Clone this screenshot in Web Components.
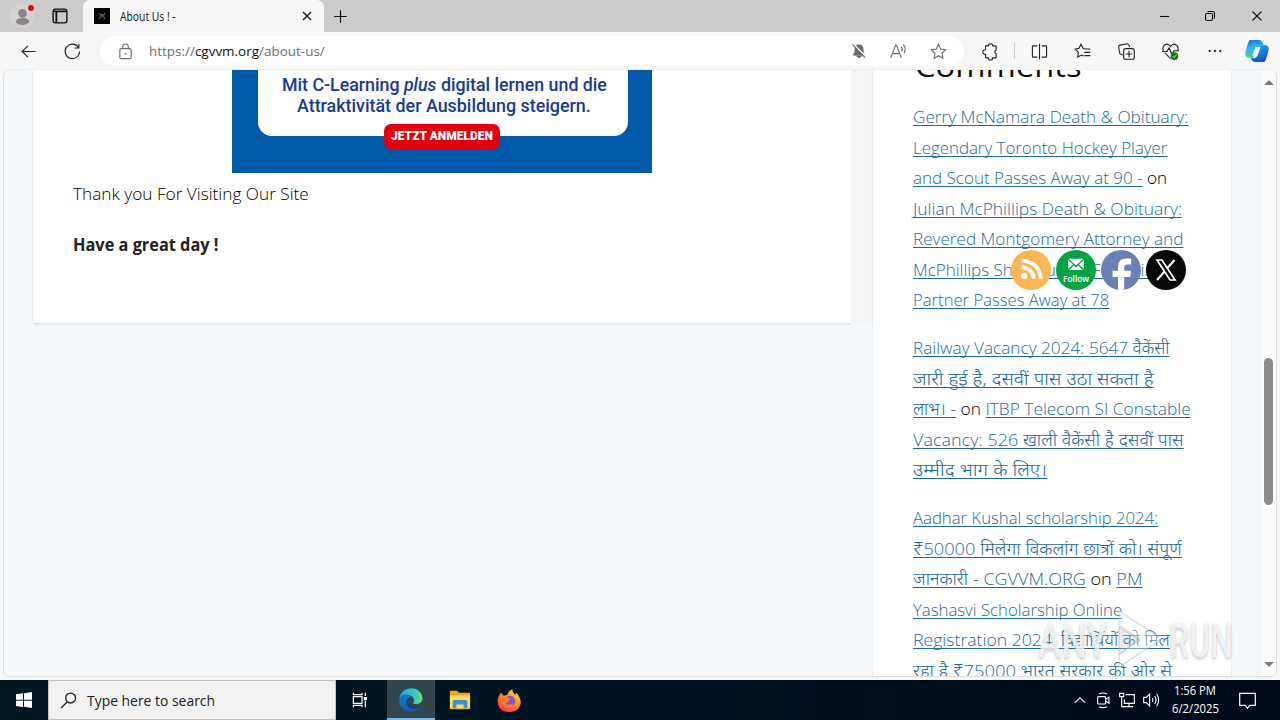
<!DOCTYPE html>
<html lang="en">
<head>
<meta charset="utf-8">
<title>About Us ! -</title>
<style>
  body {
    margin: 0;
    width: 1280px;
    height: 720px;
    overflow: hidden;
    background: #f7f7f7;
    font-family: "Open Sans", "Noto Sans", "Noto Sans Devanagari", "Lohit Devanagari", sans-serif;
    color: #222;
    display: flex;
    flex-direction: column;
  }
</style>
</head>
<body>
<tab-strip><fit-line w="56">About Us ! -</fit-line></tab-strip>
<tool-bar></tool-bar>
<page-view>
  <main-card slot="main">
    <ad-banner></ad-banner>
    <fit-line slot="text" w="236">Thank you For Visiting Our Site</fit-line>
    <fit-line slot="strong" w="146">Have a great day !</fit-line>
  </main-card>
  <comment-list slot="side"></comment-list>
</page-view>
<task-bar></task-bar>

<script>
const icons = {
  user: '<circle cx="12" cy="8" r="5.5" fill="#8b8684" stroke="none"/><path d="M3.5 19c0-7 17-7 17 0c-3 5-14 5-17 0Z" fill="#8b8684" stroke="none"/>',
  tabs: '<rect x="4.5" y="4.5" width="15" height="15" rx="2.5"/><path d="M4.500 7h15M8 8v11" stroke-width="2"/>',
  close: '<path d="M6 6l12 12M18 6L6 18"/>',
  plus: '<path d="M12 2v20M2 12h20"/>',
  back: '<path d="M22 12H3M11 4l-8 8 8 8"/>',
  reload: '<path d="M20.500 6.500A10.200 10.200 0 1 0 22 12M21 1v6h-6"/>',
  lock: '<rect x="4" y="8" width="16" height="14" rx="2"/><path d="M8 8V5.500a4 4 0 0 1 8 0V8"/><circle cx="12" cy="15" r="1.300" fill="currentColor" stroke="none"/>',
  bell: '<path d="M4 18h16l-2-4V9a6 6 0 0 0-12 0v5ZM9 20h6l-3 2Z" fill="currentColor"/><path d="M4 2l19 19" stroke="#fff" stroke-width="2"/><path d="M2 2l19 20"/>',
  read: '<path d="M1 21L8 3h1l7 18M4 15h9M15.500 5q3 3 1 7M18.500 2q5 5 1.500 12"/>',
  star: '<path d="M12 2l3 6.500 7 1-5 5 1.200 7L12 18l-6.200 3.500 1.200-7-5-5 7-1Z"/>',
  puzzle: '<path d="M5 4h4a3 3 0 0 1 6 0h4q1 0 1 1v5a2.600 2.600 0 0 0 0 5v5q0 1-1 1h-4a3 3 0 0 1-6 0H6q-1 0-1-1v-4a3.300 3.300 0 1 1 0-6.500V5Z"/>',
  split: '<path d="M9 4H3q-1 0-1 1v14q0 1 1 1h6M15 4h6q1 0 1 1v14q0 1-1 1h-6M12 1v22"/>',
  favs: '<path d="M14 8.500L12 8 9 2 6 8 0.500 9l4.500 5-1 7 6-3 3 1.500M14 9h9M14 14h9M14 19h9"/>',
  collect: '<path d="M7 17L4 16q-2-1-2-3L1 5q0-2 2-2l10-2q2 0 3 3v2"/><rect x="8" y="8" width="15" height="15" rx="3"/><path d="M15.500 11v9M11 15.500h9"/>',
  health: '<path d="M2 11C-1 3 8-2 12 5c4-7 13-2 10 6M4 14l8 8M0 12h7l3-5 4 9 3-5h7"/><circle cx="17.500" cy="18.500" r="5.500" fill="#107c10" stroke="none"/><path d="M15 18.500l2 2 3.500-4" stroke="#fff" stroke-width="1"/>',
  more: '<g fill="currentColor" stroke="none"><circle cx="4" cy="12" r="1.700"/><circle cx="12" cy="12" r="1.700"/><circle cx="20" cy="12" r="1.700"/></g>',
  copilot: '<defs><linearGradient id="a" x2=".3" y2="1"><stop stop-color="#0c6bd4"/><stop offset=".5" stop-color="#2bb9e8"/><stop offset="1" stop-color="#3fd39b"/></linearGradient><linearGradient id="b" x2=".4" y2="1"><stop stop-color="#25b5e5"/><stop offset="1" stop-color="#1454cf"/></linearGradient></defs><g stroke="none"><path d="M5 1h9q3 0 4 4l1 3h-4q-3 0-4 3l-2 6q-1 3-4 2C-1 18 0 15 1 11L3 4Q4 1 5 1Z" fill="url(#a)"/><path d="M19 23h-9q-3 0-4-4h3q3 0 4-4l2-6q1-3 4-3c6 0 5 4 4 8l-2 6q-1 3-2 3Z" fill="url(#b)"/><path d="M10.500 8h5l-3 8.500h-5Z" fill="#f4fbff"/></g>',
  minimize: '<path d="M2 12h20"/>',
  restore: '<rect x="3" y="7" width="14" height="14" rx="3"/><path d="M7 4q1-1 3-1h7q4 0 4 4v7q0 2-1 3"/>',
  windows: '<g fill="#fff" stroke="none"><path d="M0 3.500l10.500-1.500v9.500H0ZM12 1.800L24 0v11.500H12ZM0 13h10.500v9.500L0 21ZM12 13h12v11l-12-1.800Z"/></g>',
  search: '<circle cx="15" cy="8.500" r="7"/><path d="M10 14L1.500 22.500"/>',
  taskview: '<path d="M2 1v3h13V1M2 23v-3h13v3M2 7h13v10H2ZM20 1v5M20 13v10"/><rect x="18.500" y="8.500" width="3" height="3" fill="currentColor"/>',
  edge: '<defs><linearGradient id="e" x2="1"><stop stop-color="#27a6e8"/><stop offset=".6" stop-color="#2cc4c8"/><stop offset="1" stop-color="#68e25d"/></linearGradient><linearGradient id="f" y2="1" x2=".3"><stop stop-color="#1480d4"/><stop offset="1" stop-color="#1559ad"/></linearGradient></defs><g stroke="none"><path d="M0.500 11C2-3 22-3 23.500 10c0 5-4 6.500-8 6-2-.5-1-1.500-.5-3C15.500 6 4 5 .5 11Z" fill="url(#e)"/><path d="M.5 12C1 5 9 5 12 9c-5 1-5 10 3 11 3 .5 5-1 7-1.500C15 28-.5 24 .5 12Z" fill="url(#f)"/><path d="M11 9C5 12 7 20 14 21c4 0 7-1 8-3-7 3-12 0-12.500-4 0-2 .5-3 1.500-5Z" fill="#123f86"/></g>',
  folder: '<g stroke="none"><path d="M1 2h8l2 2h12v18H1Z" fill="#e9a820"/><path d="M1 7h22v14H1Z" fill="#ffd864"/><path d="M4 21v-7q0-2 2-2h12q2 0 2 2v7h-4v-4H8v4Z" fill="#3994d5"/></g>',
  firefox: '<defs><linearGradient id="x" x1=".8" x2=".2" y2="1"><stop stop-color="#ffe43a"/><stop offset=".45" stop-color="#ff8b23"/><stop offset="1" stop-color="#ff2a55"/></linearGradient></defs><g stroke="none"><path d="M3 4l3 3 4-1q1-4 5-6 0 4 3 6l1-2c9 9 4 20-7 20C-1 24-3 12 3 4Z" fill="url(#x)"/><path d="M9 8q7-3 9 4-1 7-7 6-6-1-5-6l4 1 3-2Z" fill="#8052d0"/><path d="M3 9q4 0 6 3l3 1-4 2q3 3 8 0-2 7-9 4-4-4-4-10Z" fill="#ff7a25"/></g>',
  chevron: '<path d="M3 17l9-9 9 9"/>',
  meet: '<rect x="4" y="7" width="12" height="11" rx="1.500"/><path d="M16 11l5-3v9l-5-3M6 3q6-3 12 0M6 22q6 3 12 0"/>',
  network: '<path d="M10 4h13v13H8v-6M10 22h11M15 17v5M1 2h6v5H1ZM4 7v15h6"/>',
  volume: '<path d="M1 8h4l5-5v18l-5-5H1ZM14 9q2 3 0 6M17.500 6q4 6 0 12M20.500 3q6 9 0 18"/>',
  notice: '<path d="M1 2h22v17h-8l-3 4-3-4H1Z"/>',
  rss: '<g stroke="#fff" fill="none" stroke-width="3.200"><path d="M4 9.500q9 .5 10.500 10"/><path d="M4 4q15 1 16.500 15.500"/></g><circle cx="6.200" cy="17.200" r="2.600" fill="#fff" stroke="none"/>',
  mail: '<path d="M2 5h20L12 14ZM1.500 6.500v12L8 12.500ZM22.500 6.500v12L16 12.500ZM9 14l3 2.500 3-2.500 6 6H3Z" fill="#fff" stroke="none"/>',
  facebook: '<path d="M9.500 25V14.500H5.500V10h4V7q0-6 6-6h3.500v4.500h-2.500q-2.500 0-2.500 2V10h5l-.7 4.500H14V25Z" fill="#fff" stroke="none"/>',
  x: '<path d="M3 2h5l13 20h-5Z" stroke="#fff" stroke-width="1.700"/><path d="M20.500 2l-7.500 8.500M10.500 13.500L3 22" stroke="#fff" stroke-width="2"/>'
};

class UiIcon extends HTMLElement {
  constructor() {
    super();
    this.attachShadow({ mode: 'open' });
  }
  connectedCallback() {
    const size = this.getAttribute('size') || 16;
    const line = 24 / size * (this.getAttribute('line') || 1.1);
    this.shadowRoot.innerHTML = `
      <style>
        :host { display: inline-block; width: ${size}px; height: ${size}px; flex: none; }
        svg { display: block; overflow: visible; }
      </style>
      <svg width="${size}" height="${size}" viewBox="0 0 24 24" fill="none" stroke="currentColor" stroke-width="${line}">${icons[this.getAttribute('name')]}</svg>`;
  }
}
customElements.define('ui-icon', UiIcon);

// one line of text, scaled sideways to the width in "w"
class FitLine extends HTMLElement {
  constructor() {
    super();
    this.attachShadow({ mode: 'open' });
  }
  connectedCallback() {
    const w = Number(this.getAttribute('w'));
    this.shadowRoot.innerHTML = `
      <style>
        :host { display: block; width: ${w}px; white-space: nowrap; flex: none; }
        span { display: inline-block; transform-origin: 0 50%; }
        ::slotted(a) { color: #1e6a9c; text-decoration: underline; text-underline-offset: 2px; text-decoration-thickness: 1px; text-decoration-skip-ink: none; }
      </style>
      <span><slot></slot></span>`;
    const span = this.shadowRoot.querySelector('span');
    const fit = () => {
      if (span.offsetWidth) span.style.transform = `scaleX(${w / span.offsetWidth})`;
    };
    fit();
    new ResizeObserver(fit).observe(span);
  }
}
customElements.define('fit-line', FitLine);

function define(name, html) {
  const template = document.createElement('template');
  template.innerHTML = html;
  customElements.define(name, class extends HTMLElement {
    constructor() {
      super();
      this.attachShadow({ mode: 'open' });
      this.shadowRoot.appendChild(template.content.cloneNode(true));
    }
  });
}

define('tab-strip', `
  <style>
    :host { display: flex; height: 32px; background: #ccc; color: #111; align-items: center; font-size: 12px; }
    .left { width: 83px; height: 32px; display: flex; align-items: center; box-sizing: border-box; padding-left: 10px; gap: 15px; }
    .user { position: relative; width: 24px; height: 24px; border-radius: 50%; background: #d5d3d2; display: flex; justify-content: center; align-items: center; }
    .user i { position: absolute; width: 6px; height: 6px; border-radius: 50%; background: #e00b1c; right: 0; top: 1px; }
    .tab { width: 241px; height: 32px; box-sizing: border-box; background: #f7f7f7; border-radius: 7px 7px 0 0; display: flex; align-items: center; padding: 0 9px 0 11px; }
    .fav { width: 16px; height: 16px; background: #050706; display: flex; align-items: center; justify-content: center; margin-right: 10px; color: #66706b; }
    .close { margin-left: auto; }
    .plus { margin-left: 9px; }
    .win { margin-left: auto; display: flex; align-items: center; padding-right: 14px; }
    .win ui-icon + ui-icon { margin-left: 34px; }
    .win ui-icon:last-child { margin-left: 32px; }
  </style>
  <div class="left"><div class="user"><ui-icon name="user" size="19"></ui-icon><i></i></div><ui-icon name="tabs" size="22" line="1.4"></ui-icon></div>
  <div class="tab"><div class="fav"><svg width="8" height="8" viewBox="0 0 8 8" fill="none" stroke="currentColor"><path d="M1 1l2 3-2 3M7 1L5 4l2 3M3 4h2M3 2l1 1 1-1"/></svg></div><slot></slot><ui-icon class="close" name="close" size="16" line="1.300"></ui-icon></div>
  <ui-icon class="plus" name="plus" size="15" line="1.2"></ui-icon>
  <div class="win"><ui-icon name="minimize" size="11"></ui-icon><ui-icon name="restore" size="12"></ui-icon><ui-icon name="close" size="18"></ui-icon></div>
`);

define('tool-bar', `
  <style>
    :host { display: flex; height: 38px; background: #f7f7f7; color: #222; align-items: center; box-sizing: border-box; padding: 0 10px 0 20px; font-size: 13px; }
    .address { width: 864px; height: 30px; box-sizing: border-box; margin-left: 19px; background: #fff; border-radius: 15px; display: flex; align-items: center; padding: 0 17px 0 17px; color: #6c6c6c; flex: none; }
    .address fit-line { margin-left: 15px; }
    b { font-weight: 400; color: #111; }
    .end { margin-left: auto; display: flex; gap: 23px; }
    .reload { margin-left: 27px; }
    .tools { margin-left: 18px; display: flex; align-items: center; gap: 27.3px; }
    .tools i { width: 1px; height: 16px; background: #ccc; margin: 0 -12px 0 -12px; }
    .copilot { margin-left: -5px; }
  </style>
  <ui-icon name="back" size="17"></ui-icon>
  <ui-icon class="reload" name="reload" size="17"></ui-icon>
  <div class="address">
    <ui-icon name="lock" size="17"></ui-icon>
    <fit-line w="176">https://<b>cgvvm.org</b>/about-us/</fit-line>
    <div class="end"><ui-icon name="bell" size="16"></ui-icon><ui-icon name="read" size="17"></ui-icon><ui-icon name="star" size="17"></ui-icon></div>
  </div>
  <div class="tools">
    <ui-icon name="puzzle" size="17"></ui-icon><i></i><ui-icon name="split" size="17"></ui-icon><ui-icon name="favs" size="16"></ui-icon><ui-icon name="collect" size="17"></ui-icon><ui-icon name="health" size="17"></ui-icon><ui-icon name="more" size="16"></ui-icon><ui-icon class="copilot" name="copilot" size="24"></ui-icon>
  </div>
`);

define('page-view', `
  <style>
    :host { display: block; height: 610px; background: #f7f7f7; padding: 0 3px; box-sizing: border-box; }
    .frame { position: relative; height: 608px; box-sizing: border-box; border: 1px solid #dedede; border-top-color: #eee; margin-top: -1px; border-radius: 7px; overflow: hidden; background: #f4f8fb; display: flex; padding-left: 29px; }
    .gap { width: 22px; height: 254px; background: #f4f5f6; }
    .scroll { width: 15px; background: #fcfcfc; margin-left: auto; display: flex; flex-direction: column; align-items: center; padding: 10px 0 9px; box-sizing: border-box; }
    .up, .down { border: 5px solid transparent; border-top: 0; border-bottom: 5px solid #7e7e7e; }
    .down { border-bottom: 0; border-top: 5px solid #7e7e7e; margin-top: auto; }
    .thumb { width: 9px; height: 147px; border-radius: 5px; background: #8a8a8a; margin-top: 273px; }
    .social { position: absolute; left: 1007px; top: 180px; display: flex; gap: 5px; }
    .dot { width: 40px; height: 40px; border-radius: 50%; display: flex; flex-direction: column; align-items: center; justify-content: center; overflow: hidden; color: #fff; font: 600 9px/12px "Open Sans", sans-serif; }
    .mark { position: absolute; left: 1034px; top: 530px; display: flex; align-items: center; height: 82px; color: rgba(255,255,255,.8); font: 500 48px/50px Roboto, sans-serif; text-shadow: 0 0 2px rgba(90,90,90,.3), 0 3px 3px rgba(90,90,90,.2); }
    .mark svg { margin: 0 3px 0 -2px; }
  </style>
  <div class="frame">
    <slot name="main"></slot>
    <div class="gap"></div>
    <slot name="side"></slot>
    <div class="scroll"><div class="up"></div><div class="thumb"></div><div class="down"></div></div>
    <div class="social">
      <div class="dot" style="background:#f9b654"><ui-icon name="rss" size="28"></ui-icon></div>
      <div class="dot" style="background:#02a343"><ui-icon name="mail" size="18"></ui-icon><fit-line w="26">Follow</fit-line></div>
      <div class="dot" style="background:#6b81b5"><ui-icon name="facebook" size="33" style="margin-top:7px"></ui-icon></div>
      <div class="dot" style="background:#080808"><ui-icon name="x" size="24"></ui-icon></div>
    </div>
    <div class="mark">
      <fit-line w="70">ANY</fit-line>
      <svg width="60" height="64" viewBox="0 0 60 64" fill="rgba(255,255,255,.35)" stroke="rgba(170,170,170,.35)" stroke-width="1.500"><path d="M13 2l43 28L13 58V46l20-16-20-14Z"/><path d="M13 18l21 13-21 14Z" fill="rgba(190,190,190,.3)"/></svg>
      <fit-line w="64">RUN</fit-line>
    </div>
  </div>
`);

define('main-card', `
  <style>
    :host { display: flex; flex-direction: column; width: 818px; height: 253px; background: #fff; box-shadow: 0 1px 2px rgba(0,0,0,.14); font-size: 17px; line-height: 30px; color: #222; box-sizing: border-box; padding: 0 40px; flex: none; }
    ::slotted(ad-banner) { align-self: center; }
    .text { margin-top: 6px; font-weight: 300; color: #000; }
    .strong { margin-top: 21px; font-weight: 700; }
  </style>
  <slot></slot>
  <div class="text"><slot name="text"></slot></div>
  <div class="strong"><slot name="strong"></slot></div>
`);

define('ad-banner', `
  <style>
    :host { display: flex; flex-direction: column; align-items: center; width: 420px; height: 103px; background: #0059a9; font-family: Roboto, sans-serif; }
    .box { width: 370px; height: 66px; margin-left: 2px; background: #fff; border-radius: 0 0 14px 14px; color: #173b8f; font-size: 18px; font-weight: 500; line-height: 21px; display: flex; flex-direction: column; align-items: center; box-sizing: border-box; padding: 4px 0 0 2px; }
    .cta { width: 116px; height: 25px; border-radius: 7px; background: #e3000f; color: #fff; font-size: 12px; font-weight: 900; line-height: 25px; display: flex; justify-content: center; margin-top: -12px; }
  </style>
  <div class="box">
    <fit-line w="325">Mit C-Learning <em>plus</em> digital lernen und die</fit-line>
    <fit-line w="294">Attraktivität der Ausbildung steigern.</fit-line>
  </div>
  <div class="cta"><fit-line w="102">JETZT ANMELDEN</fit-line></div>
`);

define('comment-list', `
  <style>
    :host { display: block; width: 358px; height: 606px; background: #fff; box-sizing: border-box; padding-left: 40px; font-size: 17px; font-weight: 300; line-height: 30.5px; color: #000; overflow: hidden; flex: none; box-shadow: 0 0 2px rgba(0,0,0,.1); }
    h2 { margin: -23px 0 18px 2px; font-size: 29px; line-height: 37px; font-weight: 400; color: #111; }
    p { margin: 0 0 17.500px; }
  </style>
  <h2><fit-line w="167">Comments</fit-line></h2>
  <p>
    <fit-line w="275"><a>Gerry McNamara Death &amp; Obituary:</a></fit-line>
    <fit-line w="254"><a>Legendary Toronto Hockey Player</a></fit-line>
    <fit-line w="254"><a>and Scout Passes Away at 90 -</a> on</fit-line>
    <fit-line w="269"><a>Julian McPhillips Death &amp; Obituary:</a></fit-line>
    <fit-line w="270"><a>Revered Montgomery Attorney and</a></fit-line>
    <fit-line w="250"><a>McPhillips Shinbaum &amp; Founding</a></fit-line>
    <fit-line w="196"><a>Partner Passes Away at 78</a></fit-line>
  </p>
  <p>
    <fit-line w="256"><a>Railway Vacancy 2024: 5647 वैकेंसी</a></fit-line>
    <fit-line w="240"><a>जारी हुई है, दसवीं पास उठा सकता है</a></fit-line>
    <fit-line w="278"><a>लाभ। -</a> on <a>ITBP Telecom SI Constable</a></fit-line>
    <fit-line w="271"><a>Vacancy: 526 खाली वैकेंसी है दसवीं पास</a></fit-line>
    <fit-line w="134"><a>उम्मीद भाग के लिए।</a></fit-line>
  </p>
  <p>
    <fit-line w="245"><a>Aadhar Kushal scholarship 2024:</a></fit-line>
    <fit-line w="269"><a>₹50000 मिलेगा विकलांग छात्रों को। संपूर्ण</a></fit-line>
    <fit-line w="229"><a>जानकारी - CGVVM.ORG</a> on <a>PM</a></fit-line>
    <fit-line w="209"><a>Yashasvi Scholarship Online</a></fit-line>
    <fit-line w="257"><a>Registration 2024: विद्यार्थियों को मिल</a></fit-line>
    <fit-line w="259"><a>रहा है ₹75000 भारत सरकार की ओर से</a></fit-line>
  </p>
`);

define('task-bar', `
  <style>
    :host { display: flex; height: 40px; background: linear-gradient(90deg, #001720, #001320 50%, #000a18); color: #fff; align-items: center; }
    .start, .app { width: 48px; height: 40px; display: flex; align-items: center; justify-content: center; }
    .search { width: 288px; height: 40px; box-sizing: border-box; border: 1px solid #c3c3c3; background: #f1f1f1; color: #222; display: flex; align-items: center; padding-left: 11px; gap: 10px; font-size: 15px; }
    .app { width: 50px; }
    .app.on { width: 48px; background: #33464e; box-shadow: inset 0 -2px #76b9ed; }
    .app.tv { width: 51px; box-sizing: border-box; padding-right: 3px; }
    .tray { margin-left: auto; display: flex; align-items: center; }
    .tray ui-icon { margin-left: 8px; }
    .clock { width: 50px; margin-left: 11px; font-size: 12px; line-height: 18px; display: flex; flex-direction: column; align-items: center; }
    .tray .notice { margin: 0 24px 0 19px; }
  </style>
  <div class="start"><ui-icon name="windows" size="16"></ui-icon></div>
  <div class="search"><ui-icon name="search" size="17" line="1.3"></ui-icon><fit-line w="128">Type here to search</fit-line></div>
  <div class="app tv"><ui-icon name="taskview" size="16" line="1.2"></ui-icon></div>
  <div class="app on"><ui-icon name="edge" size="24"></ui-icon></div>
  <div class="app"><ui-icon name="folder" size="22"></ui-icon></div>
  <div class="app" style="width:48px"><ui-icon name="firefox" size="23"></ui-icon></div>
  <div class="tray">
    <ui-icon name="chevron" size="14"></ui-icon>
    <ui-icon name="meet" size="16"></ui-icon>
    <ui-icon name="network" size="16"></ui-icon>
    <ui-icon name="volume" size="16"></ui-icon>
    <div class="clock"><fit-line w="42">1:56 PM</fit-line><fit-line w="47">6/2/2025</fit-line></div>
    <ui-icon class="notice" name="notice" size="17" line="1.2"></ui-icon>
  </div>
`);
</script>
</body>
</html>
